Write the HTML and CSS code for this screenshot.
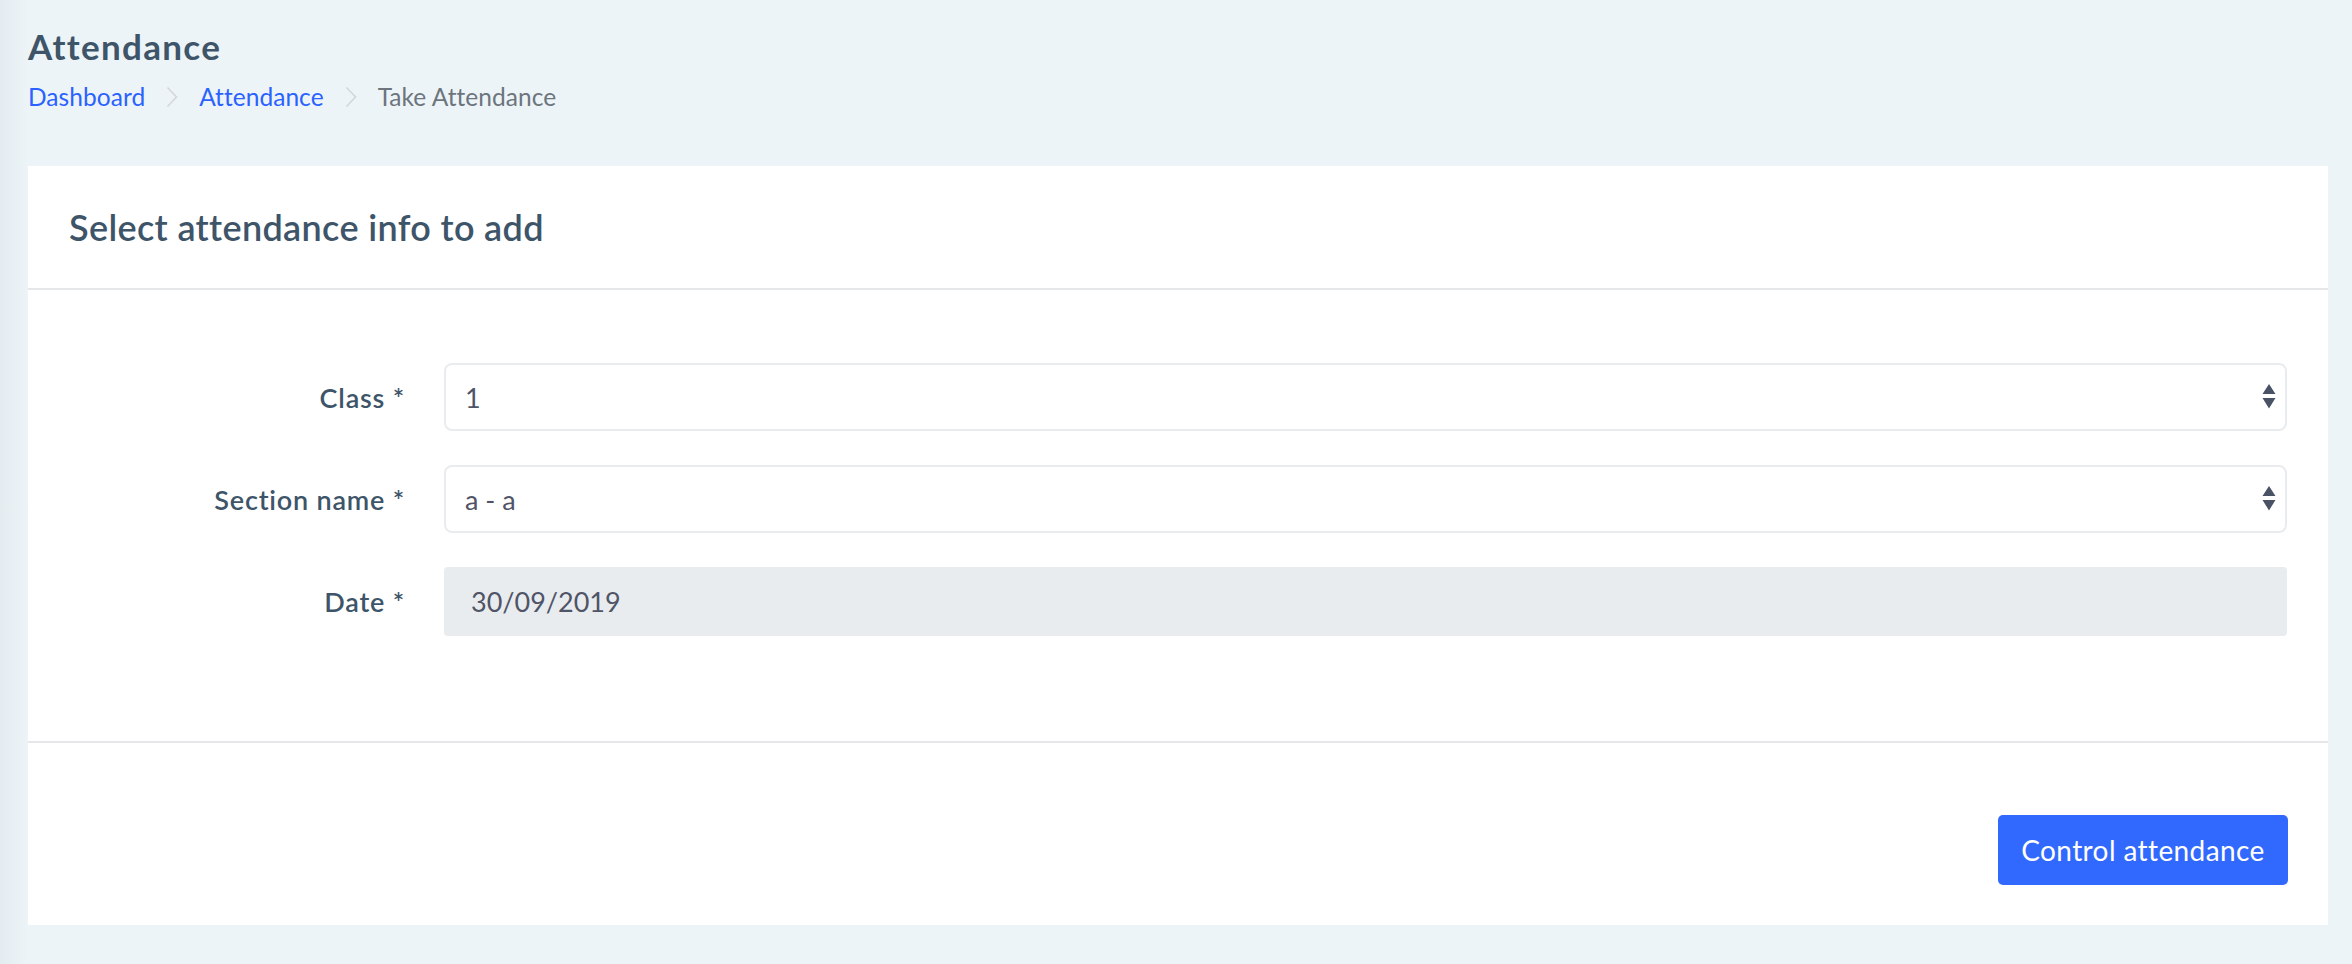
FILE: index.html
```html
<!DOCTYPE html>
<html lang="en">
<head>
<meta charset="utf-8">
<title>Attendance</title>
<link rel="stylesheet" href="styles.css">
</head>
<body>
<div class="page">
  <div class="page-head">
    <h1 class="page-title">Attendance</h1>
    <nav class="crumbs">
      <a class="crumb-link" href="#">Dashboard</a>
      <svg class="crumb-sep" width="12" height="22" viewBox="0 0 12 22"><path d="M1.5 1.5 L10.5 11 L1.5 20.5" fill="none" stroke="#d3d6da" stroke-width="1.6"/></svg>
      <a class="crumb-link" href="#">Attendance</a>
      <svg class="crumb-sep" width="12" height="22" viewBox="0 0 12 22"><path d="M1.5 1.5 L10.5 11 L1.5 20.5" fill="none" stroke="#d3d6da" stroke-width="1.6"/></svg>
      <span class="crumb-current">Take Attendance</span>
    </nav>
  </div>

  <section class="card">
    <header class="card-header">
      <h4 class="card-title">Select attendance info to add</h4>
    </header>
    <form class="card-body">
      <label class="field-label" for="class">Class *</label>
      <div class="select-wrap">
        <select id="class" class="field-select">
          <option>1</option>
        </select>
      </div>

      <label class="field-label" for="section">Section name *</label>
      <div class="select-wrap">
        <select id="section" class="field-select">
          <option>a - a</option>
        </select>
      </div>

      <label class="field-label" for="date">Date *</label>
      <input id="date" class="field-date" type="text" value="30/09/2019" readonly>
    </form>
    <footer class="card-footer">
      <button class="btn-primary" type="button">Control attendance</button>
    </footer>
  </section>
</div>
</body>
</html>
```

FILE: styles.css
```css
* {
  box-sizing: border-box;
}

html, body {
  margin: 0;
  height: 100%;
}

body {
  font-family: Lato, "Noto Sans", sans-serif;
  background: linear-gradient(90deg, #e3ecf0 0px, #eaf1f5 18px, #edf4f8 28px) #edf4f8;
  color: #3e5569;
}

.page {
  padding: 0 24px 40px 28px;
}

.page-head {
  padding-top: 24px;
  height: 166px;
}

.page-title {
  margin: 0;
  font-size: 35px;
  line-height: 44px;
  font-weight: 700;
  color: #3e5569;
  letter-spacing: 1.3px;
}

.crumbs {
  display: flex;
  align-items: center;
  gap: 21px;
  margin-top: 14px;
  font-size: 24.5px;
  line-height: 30px;
  letter-spacing: 0.05px;
}

.crumb-link {
  color: #2962ff;
  text-decoration: none;
}

.crumb-sep {
  display: block;
}

.crumb-current {
  color: #6c757d;
}

.card {
  background: #ffffff;
}

.card-header {
  height: 124px;
  display: flex;
  align-items: center;
  padding: 0 41px;
  border-bottom: 2px solid #e6e7e8;
}

.card-title {
  margin: 0;
  font-size: 36px;
  font-weight: 600;
  color: #3e5569;
  letter-spacing: 0.35px;
}

.card-body {
  display: grid;
  grid-template-columns: 377px 1fr;
  grid-auto-rows: 68px;
  column-gap: 39px;
  row-gap: 34px;
  padding: 73px 41px 106px 0;
  margin: 0;
  border-bottom: 2px solid #e6e7e8;
}

.field-label {
  display: flex;
  align-items: center;
  justify-content: flex-end;
  font-size: 27px;
  font-weight: 600;
  color: #3e5569;
  letter-spacing: 0.8px;
}

.select-wrap {
  position: relative;
}

.field-select {
  -webkit-appearance: none;
  appearance: none;
  width: 100%;
  height: 68px;
  padding: 0 50px 0 19px;
  font-family: inherit;
  font-size: 27px;
  color: #4f5467;
  background: #ffffff url("data:image/svg+xml;utf8,<svg xmlns='http://www.w3.org/2000/svg' width='14' height='26' viewBox='0 0 14 26'><path d='M7 0 L13.5 10 L0.5 10 Z M0.5 14 L13.5 14 L7 24.5 Z' fill='%234a5266'/></svg>") no-repeat right 9px center;
  border: 2px solid #e9ecef;
  border-radius: 8px;
  outline: none;
}

.field-date {
  width: 100%;
  height: 69px;
  padding: 0 27px;
  font-family: inherit;
  font-size: 27px;
  color: #4f5467;
  background: #e9ecef;
  border: none;
  border-radius: 4px;
  outline: none;
}

.card-footer {
  display: flex;
  justify-content: flex-end;
  padding: 72px 40px 40px;
}

.btn-primary {
  height: 70px;
  width: 290px;
  padding: 0;
  font-family: inherit;
  font-size: 28px;
  letter-spacing: 0.4px;
  color: #ffffff;
  background: #3169ff;
  border: none;
  border-radius: 5px;
}
```
